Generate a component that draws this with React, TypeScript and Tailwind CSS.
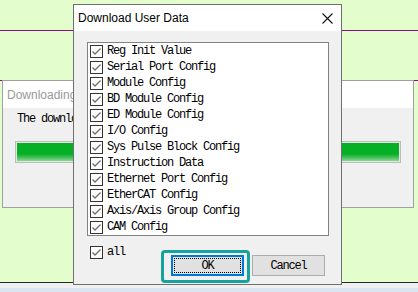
import React from "react";

const items = [
  "Reg Init Value",
  "Serial Port Config",
  "Module Config",
  "BD Module Config",
  "ED Module Config",
  "I/O Config",
  "Sys Pulse Block Config",
  "Instruction Data",
  "Ethernet Port Config",
  "EtherCAT Config",
  "Axis/Axis Group Config",
  "CAM Config",
];

const mono = "font-['Liberation_Mono',monospace] text-[12px] tracking-[-1.2px] text-black";

const CheckBox: React.FC = () => (
  <svg width="13" height="13" viewBox="0 0 13 13" className="shrink-0">
    <rect x="0.5" y="0.5" width="12" height="12" fill="#ffffff" stroke="#333333" />
    <path d="M2.5 6.5 L5 9 L10.5 3.5" fill="none" stroke="#6e6e6e" strokeWidth="1.3" />
  </svg>
);

const App: React.FC = () => {
  return (
    <div className="relative w-[418px] h-[292px] overflow-hidden bg-[#e3fdcd] font-['Liberation_Sans',Arial,sans-serif]">
      {/* desktop backdrop */}
      <div className="flex flex-col h-full">
        <div className="h-[30px]" />
        <div className="h-px bg-[#8a0a8a]" />
        <div className="h-[49px]" />
        <div className="h-px bg-[#8a0a8a]" />
        <div className="flex-1" />
        <div className="h-px bg-[#2a2a2a]" />
        <div className="h-[5px] bg-[#f0f0f0]" />
        <div className="h-[4px] bg-[#dbe5f1]" />
      </div>

      {/* background progress window (mostly hidden behind the dialog) */}
      <div className="absolute left-[2px] top-[80px] w-[412px] h-[128px] border border-[#a0a0a0] bg-[#f0f0f0] flex flex-col">
        <div className="h-[27px] bg-white flex items-center pl-[4px] text-[12px] text-[#9a9a9a]">
          <span className="w-[66px] overflow-hidden whitespace-nowrap">Downloading</span>
        </div>
        <div className="pl-[14px] pt-[2px]">
          <div className={`${mono} w-[56px] overflow-hidden whitespace-nowrap`}>The download</div>
        </div>
        <div className="mx-[12px] mt-[13px] h-[22px] border border-[#bcbcbc] bg-[#e6e6e6] p-px">
          <div className="h-full w-full bg-[linear-gradient(to_bottom,#06b025_0%,#06b025_62%,#4cc25e_82%,#86d892_100%)]" />
        </div>
      </div>

      {/* main dialog */}
      <div className="absolute left-[73px] top-[4px] w-[269px] h-[281px] border border-[#6f6f6f] bg-[#f0f0f0] flex flex-col">
        <div className="h-[26px] bg-white flex items-center justify-between pl-[4px] pr-[8px]">
          <span className="text-[12px] text-black">Download User Data</span>
          <svg width="11" height="11" viewBox="0 0 11 11">
            <path d="M0.5 0.5 L10.5 10.5 M10.5 0.5 L0.5 10.5" stroke="#111111" strokeWidth="1.1" />
          </svg>
        </div>
        <div className="px-[13px] pt-[11px] flex flex-col">
          <div className="w-[242px] border border-[#828282] bg-white flex flex-col">
            {items.map((label) => (
              <div key={label} className="h-[16px] flex items-center gap-[4px] pl-[2px]">
                <CheckBox />
                <span className={mono}>{label}</span>
              </div>
            ))}
          </div>
          <div className="flex items-start justify-between">
            <div className="mt-[7px] flex items-center gap-[4px] pl-[3px]">
              <CheckBox />
              <span className={mono}>all</span>
            </div>
            <div className="mt-[19px] flex gap-[8px] mr-[3px]">
              <button className="w-[73px] h-[21px] border-2 border-[#0078d7] bg-[#e1e1e1] p-px">
                <div className={`${mono} h-full w-full border border-dotted border-black flex items-center justify-center`}>
                  OK
                </div>
              </button>
              <button className={`${mono} w-[73px] h-[21px] border border-[#adadad] bg-[#e1e1e1] flex items-center justify-center`}>
                Cancel
              </button>
            </div>
          </div>
        </div>
      </div>

      {/* highlight annotation around OK */}
      <div className="absolute left-[161px] top-[250px] w-[89px] h-[33px] border-[3px] border-[#16a39e] rounded-[4px]" />
    </div>
  );
};

export default App;
